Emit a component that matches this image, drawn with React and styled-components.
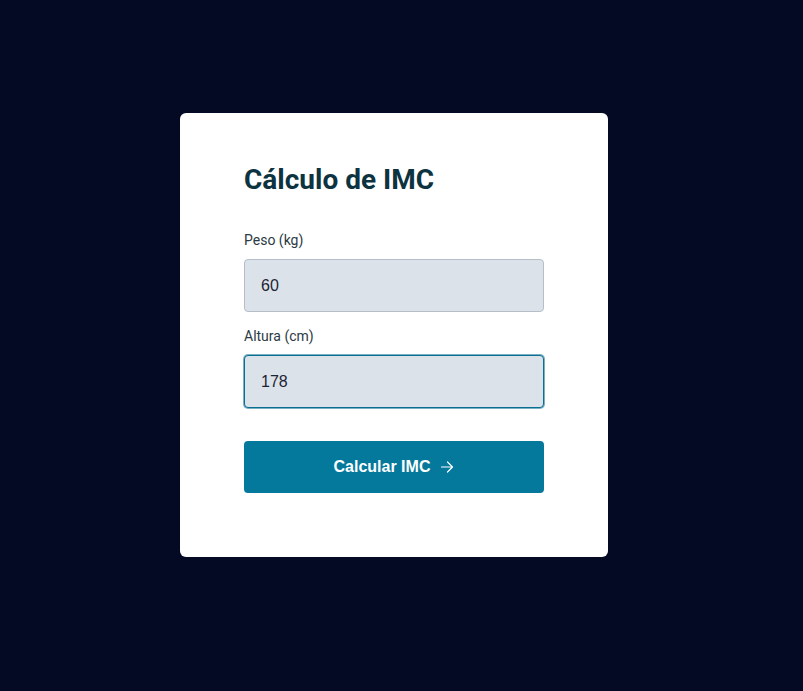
import React, { useState } from 'react'
import styled, { createGlobalStyle } from 'styled-components'

const GlobalStyle = createGlobalStyle`
  html, body {
    margin: 0;
    padding: 0;
    background: #050a24;
  }
`

const Page = styled.div`
  min-height: 100vh;
  display: flex;
  justify-content: center;
  align-items: center;
  padding: 0 15px 21px 0;
  box-sizing: border-box;
  background: #050a24;
`

const Card = styled.form`
  width: 428px;
  box-sizing: border-box;
  padding: 50px 64px 64px;
  background: #ffffff;
  border-radius: 6px;
  display: flex;
  flex-direction: column;
`

const Title = styled.h1`
  margin: 0 0 35px;
  font-family: Roboto, sans-serif;
  font-size: 28px;
  line-height: 34px;
  font-weight: 700;
  color: #0d3341;
`

const Field = styled.div`
  display: flex;
  flex-direction: column;
  margin-bottom: ${(p) => p.$gap || 16}px;
`

const Label = styled.label`
  font-family: Roboto, sans-serif;
  font-size: 14px;
  line-height: 16px;
  color: #2c3a44;
  margin-bottom: 11px;
`

const Input = styled.input`
  height: 53px;
  box-sizing: border-box;
  padding: 0 16px;
  border: 1px solid ${(p) => (p.$focused ? '#0b6f92' : '#b7bec7')};
  box-shadow: ${(p) => (p.$focused ? '0 0 0 1px rgba(11, 111, 146, 0.55)' : 'none')};
  border-radius: 4px;
  background: #dce2ea;
  font-family: 'Liberation Sans', Arial, sans-serif;
  font-size: 16px;
  color: #1c2433;
  outline: none;
`

const Button = styled.button`
  height: 52px;
  border: none;
  border-radius: 4px;
  background: #04799c;
  color: #ffffff;
  font-family: 'Liberation Sans', Arial, sans-serif;
  font-size: 16px;
  font-weight: 700;
  display: flex;
  align-items: center;
  justify-content: center;
  gap: 10px;
  cursor: pointer;
`

const Arrow = () => (
  <svg width="14" height="14" viewBox="0 0 14 14" fill="none" stroke="#fff" strokeWidth="1.2" strokeLinecap="round" strokeLinejoin="round">
    <path d="M1.5 7h11M7.5 2l5 5-5 5" />
  </svg>
)

export default function App() {
  const [peso, setPeso] = useState('60')
  const [altura, setAltura] = useState('178')

  return (
    <>
      <GlobalStyle />
      <Page>
        <Card onSubmit={(e) => e.preventDefault()}>
          <Title>Cálculo de IMC</Title>
          <Field>
            <Label htmlFor="peso">Peso (kg)</Label>
            <Input id="peso" value={peso} onChange={(e) => setPeso(e.target.value)} />
          </Field>
          <Field $gap={33}>
            <Label htmlFor="altura">Altura (cm)</Label>
            <Input id="altura" $focused value={altura} onChange={(e) => setAltura(e.target.value)} autoFocus />
          </Field>
          <Button type="submit">
            Calcular IMC <Arrow />
          </Button>
        </Card>
      </Page>
    </>
  )
}
